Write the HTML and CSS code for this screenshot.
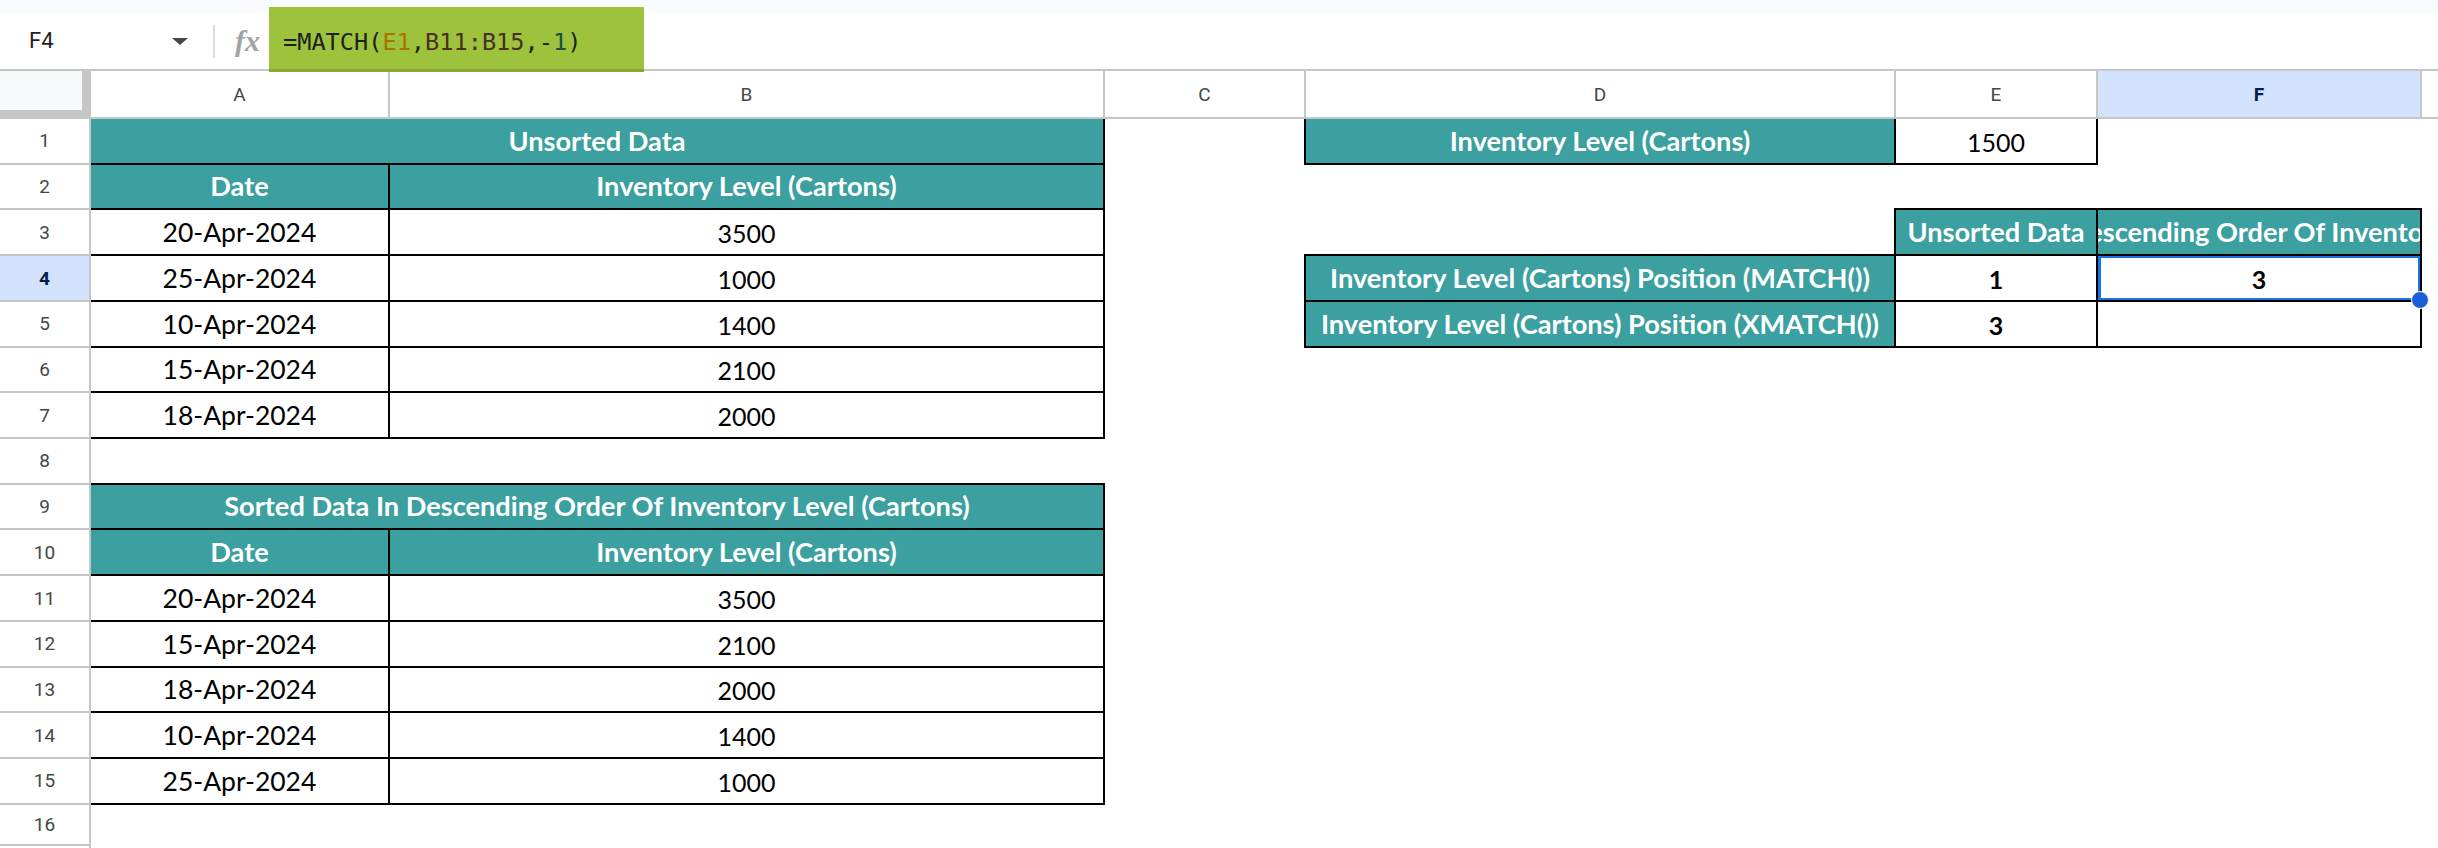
FILE: index.html
```html
<!DOCTYPE html>
<html lang="en">
  <head>
    <meta charset="UTF-8" />
    <title>MATCH descending</title>
    <link rel="stylesheet" href="styles.css">
  </head>
  <body>
    <div class="top-strip"></div>
    <div class="formula-bar">
      <div class="name-box">
        <span>F4</span>
        <span class="caret"></span>
      </div>
      <div class="divider"></div>
      <span class="fx">fx</span>
      <div class="formula">=MATCH(<span class="ref1">E1</span>,<span class="ref2">B11:B15</span>,-<span class="lit">1</span>)</div>
    </div>

    <div class="grid-wrap">
      <table class="sheet">
        <colgroup>
          <col class="w-hdr">
          <col class="w-a">
          <col class="w-b">
          <col class="w-c">
          <col class="w-d">
          <col class="w-e">
          <col class="w-f">
          <col class="w-g">
        </colgroup>
        <thead>
          <tr class="head-row">
            <th class="corner"></th>
            <th class="ch">A</th>
            <th class="ch">B</th>
            <th class="ch">C</th>
            <th class="ch">D</th>
            <th class="ch">E</th>
            <th class="ch sel">F</th>
            <th class="ch"></th>
          </tr>
        </thead>
        <tbody>
          <tr>
            <th class="rh">1</th>
            <td class="hd bx" colspan="2">Unsorted Data</td>
            <td></td>
            <td class="hd bx">Inventory Level (Cartons)</td>
            <td class="bx n">1500</td>
            <td></td>
            <td></td>
          </tr>
          <tr>
            <th class="rh">2</th>
            <td class="hd bx">Date</td>
            <td class="hd bx">Inventory Level (Cartons)</td>
            <td></td><td></td><td></td><td></td><td></td>
          </tr>
          <tr>
            <th class="rh">3</th>
            <td class="bx">20-Apr-2024</td>
            <td class="bx n">3500</td>
            <td></td>
            <td></td>
            <td class="hd bx">Unsorted Data</td>
            <td class="hd bx"><div class="clip"><span>Sorted Data In Descending Order Of Inventory Level (Cartons)</span></div></td>
            <td></td>
          </tr>
          <tr>
            <th class="rh sel">4</th>
            <td class="bx">25-Apr-2024</td>
            <td class="bx n">1000</td>
            <td></td>
            <td class="hd bx">Inventory Level (Cartons) Position (MATCH())</td>
            <td class="bx n strong">1</td>
            <td class="bx n strong active">3<span class="sel-box"></span><span class="handle"></span></td>
            <td></td>
          </tr>
          <tr>
            <th class="rh">5</th>
            <td class="bx">10-Apr-2024</td>
            <td class="bx n">1400</td>
            <td></td>
            <td class="hd bx">Inventory Level (Cartons) Position (XMATCH())</td>
            <td class="bx n strong">3</td>
            <td class="bx"></td>
            <td></td>
          </tr>
          <tr>
            <th class="rh">6</th>
            <td class="bx">15-Apr-2024</td>
            <td class="bx n">2100</td>
            <td></td><td></td><td></td><td></td><td></td>
          </tr>
          <tr>
            <th class="rh">7</th>
            <td class="bx">18-Apr-2024</td>
            <td class="bx n">2000</td>
            <td></td><td></td><td></td><td></td><td></td>
          </tr>
          <tr>
            <th class="rh">8</th>
            <td></td><td></td><td></td><td></td><td></td><td></td><td></td>
          </tr>
          <tr>
            <th class="rh">9</th>
            <td class="hd bx" colspan="2">Sorted Data In Descending Order Of Inventory Level (Cartons)</td>
            <td></td><td></td><td></td><td></td><td></td>
          </tr>
          <tr>
            <th class="rh">10</th>
            <td class="hd bx">Date</td>
            <td class="hd bx">Inventory Level (Cartons)</td>
            <td></td><td></td><td></td><td></td><td></td>
          </tr>
          <tr>
            <th class="rh">11</th>
            <td class="bx">20-Apr-2024</td>
            <td class="bx n">3500</td>
            <td></td><td></td><td></td><td></td><td></td>
          </tr>
          <tr>
            <th class="rh">12</th>
            <td class="bx">15-Apr-2024</td>
            <td class="bx n">2100</td>
            <td></td><td></td><td></td><td></td><td></td>
          </tr>
          <tr>
            <th class="rh">13</th>
            <td class="bx">18-Apr-2024</td>
            <td class="bx n">2000</td>
            <td></td><td></td><td></td><td></td><td></td>
          </tr>
          <tr>
            <th class="rh">14</th>
            <td class="bx">10-Apr-2024</td>
            <td class="bx n">1400</td>
            <td></td><td></td><td></td><td></td><td></td>
          </tr>
          <tr>
            <th class="rh">15</th>
            <td class="bx">25-Apr-2024</td>
            <td class="bx n">1000</td>
            <td></td><td></td><td></td><td></td><td></td>
          </tr>
          <tr class="short">
            <th class="rh">16</th>
            <td></td><td></td><td></td><td></td><td></td><td></td><td></td>
          </tr>
          <tr class="short">
            <th class="rh"></th>
            <td></td><td></td><td></td><td></td><td></td><td></td><td></td>
          </tr>
        </tbody>
      </table>
    </div>
  </body>
</html>
```

FILE: styles.css
```css
/* Page */
body {
  margin: 0;
  background: #fff;
  overflow: hidden;
  font-family: Lato, "Liberation Sans", sans-serif;
}

/* Top strip + formula bar */
.top-strip {
  height: 13px;
  background: #f9fbfd;
}

.formula-bar {
  height: 56px;
  display: flex;
  align-items: center;
  border-bottom: 2px solid #c4c7c5;
  font-family: Roboto, "Liberation Sans", sans-serif;
}

.name-box {
  width: 196px;
  box-sizing: border-box;
  padding-left: 29px;
  display: flex;
  align-items: center;
  font-size: 22px;
  line-height: 22px;
  color: #1f1f1f;
}

.caret {
  margin-left: auto;
  margin-right: 8px;
  width: 0;
  height: 0;
  border-left: 8px solid transparent;
  border-right: 8px solid transparent;
  border-top: 7px solid #444746;
}

.divider {
  width: 2px;
  height: 33px;
  margin-left: 17px;
  background: #dadce0;
}

.fx {
  margin-left: 20px;
  width: 34px;
  font-family: "Liberation Serif", serif;
  font-style: italic;
  font-weight: 700;
  font-size: 30px;
  color: #a3a3a3;
}

/* highlighted formula */
.formula {
  position: relative;
  z-index: 1;
  align-self: flex-start;
  margin-top: -6px;
  width: 375px;
  height: 65px;
  box-sizing: border-box;
  padding: 24px 0 0 14px;
  background: #9dc23b;
  border-bottom: 3px solid #88a931;
  font-family: "DejaVu Sans Mono", monospace;
  font-size: 23.6px;
  line-height: 23px;
  color: #1f1f1f;
  white-space: nowrap;
}

.ref1 { color: #a87300; }
.ref2 { color: #4a2e22; }
.lit { color: #1b5140; }

/* Sheet grid */
.grid-wrap {
  width: 100%;
  overflow: hidden;
}

.sheet {
  border-collapse: collapse;
  table-layout: fixed;
  width: 2543px;
}

.w-hdr { width: 90px; }
.w-a { width: 299px; }
.w-b { width: 715px; }
.w-c { width: 201px; }
.w-d { width: 590px; }
.w-e { width: 202px; }
.w-f { width: 324px; }
.w-g { width: 122px; }

.head-row { height: 47px; }
.sheet tbody tr { height: 45.73px; }
.sheet tbody tr.short { height: 41px; }

.corner {
  background: #f8f9fa;
  box-shadow: inset -7px -7px 0 #c4c7c5;
  border-right: 2px solid #c4c7c5;
  border-bottom: 2px solid #c4c7c5;
}

.ch,
.rh {
  padding: 0;
  font-family: Roboto, "Liberation Sans", sans-serif;
  font-size: 19px;
  font-weight: 400;
  color: #444746;
  text-align: center;
  vertical-align: middle;
  border-right: 2px solid #c4c7c5;
  border-bottom: 2px solid #c4c7c5;
}

.ch.sel,
.rh.sel {
  background: #d3e3fd;
  color: #041e49;
  font-weight: 700;
}

/* Cells */
td {
  padding: 0 4px 6px;
  text-align: center;
  vertical-align: bottom;
  white-space: nowrap;
  overflow: hidden;
  font-size: 26.5px;
  color: #000;
}

td.n {
  font-size: 25px;
}

.hd {
  background: #3ba09f;
  color: #fff;
  font-weight: 700;
}

td.hd {
  font-size: 27.2px;
}

.bx {
  border: 2px solid #000;
}

.strong {
  font-weight: 700;
}

.clip {
  display: flex;
  justify-content: center;
  overflow: hidden;
  margin: 0 -4px;
}

/* Active cell */
.active {
  position: relative;
  overflow: visible;
}

.sel-box {
  position: absolute;
  inset: 0;
  border: 2px solid #1a73e8;
  border-left-width: 3px;
}

.handle {
  position: absolute;
  right: -9px;
  bottom: -9px;
  width: 16px;
  height: 16px;
  border-radius: 50%;
  background: #1a5fd6;
  border: 1px solid #fff;
  z-index: 2;
}
```
